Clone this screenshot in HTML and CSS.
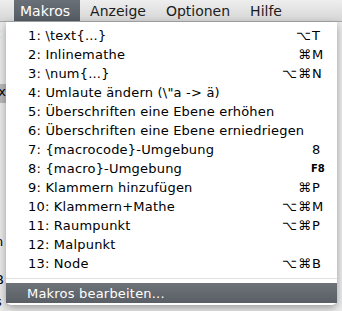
FILE: index.html
```html
<!DOCTYPE html>
<html lang="de">

<head>
    <meta charset="UTF-8">
    <title>Makros</title>
    <link rel="stylesheet" href="styles.css">
</head>

<body>

    <div class="menubar">
        <span class="menu-title active">Makros</span>
        <span class="menu-title">Anzeige</span>
        <span class="menu-title">Optionen</span>
        <span class="menu-title">Hilfe</span>
    </div>

    <div class="window">
        <div class="edge-line l1">t</div>
        <div class="edge-line l2">x</div>
        <div class="edge-line l3">n</div>
        <div class="edge-line l4">B</div>
        <div class="edge-line l5">s</div>
    </div>

    <div class="dropdown">
        <ul class="items">
            <li><span class="label">1: \text{...}</span><span class="keys"><span class="mods">⌥</span><span class="key">T</span></span></li>
            <li><span class="label">2: Inlinemathe</span><span class="keys"><span class="mods">⌘</span><span class="key">M</span></span></li>
            <li><span class="label">3: \num{...}</span><span class="keys"><span class="mods">⌥⌘</span><span class="key">N</span></span></li>
            <li><span class="label">4: Umlaute ändern (\"a -&gt; ä)</span></li>
            <li><span class="label">5: Überschriften eine Ebene erhöhen</span></li>
            <li><span class="label">6: Überschriften eine Ebene erniedriegen</span></li>
            <li><span class="label">7: {macrocode}-Umgebung</span><span class="keys"><span class="mods"></span><span class="key">8</span></span></li>
            <li><span class="label">8: {macro}-Umgebung</span><span class="keys"><span class="mods"></span><span class="key fkey">F8</span></span></li>
            <li><span class="label">9: Klammern hinzufügen</span><span class="keys"><span class="mods">⌘</span><span class="key">P</span></span></li>
            <li><span class="label">10: Klammern+Mathe</span><span class="keys"><span class="mods">⌥⌘</span><span class="key">M</span></span></li>
            <li><span class="label">11: Raumpunkt</span><span class="keys"><span class="mods">⌥⌘</span><span class="key">P</span></span></li>
            <li><span class="label">12: Malpunkt</span></li>
            <li><span class="label">13: Node</span><span class="keys"><span class="mods">⌥⌘</span><span class="key">B</span></span></li>
        </ul>
        <div class="separator"></div>
        <div class="edit-item">Makros bearbeiten...</div>
    </div>

</body>

</html>
```

FILE: styles.css
```css
body {
    margin: 0;
    width: 342px;
    height: 311px;
    overflow: hidden;
    background-color: #ececec;
    font-family: "DejaVu Sans", sans-serif;
    font-size: 13px;
    color: #000;
    position: relative;
}

.menubar {
    height: 22px;
    display: flex;
    align-items: stretch;
    padding-left: 14px;
    background: linear-gradient(#eeeeee, #d6d6d6);
    border-bottom: 1px solid #a8a8a8;
    box-sizing: border-box;
}

.menu-title {
    display: flex;
    align-items: center;
    padding: 0 10px;
    font-size: 14px;
    color: #1c1c1c;
}

.menu-title.active {
    background: linear-gradient(#6a7078, #555b63);
    color: #fff;
    padding: 0 10px 0 6px;
}

.window {
    position: absolute;
    left: 0;
    top: 22px;
    width: 8px;
    bottom: 0;
    background-color: #e9e9e9;
}

.edge-line {
    position: absolute;
    left: -5px;
    font-size: 13px;
}

.l1 { top: 4px; }
.l2 { top: 62px; height: 19px; width: 12px; background: #b9b9b9; left: -6px; text-align: right; }
.l3 { top: 212px; }
.l4 { top: 250px; }
.l5 { top: 272px; }

.dropdown {
    position: absolute;
    left: 6px;
    top: 22px;
    width: 331px;
    padding: 4px 0 2px;
    background-color: #fff;
    border-radius: 0 0 5px 5px;
    box-shadow: 0 3px 8px rgba(0, 0, 0, 0.35);
}

.items {
    list-style: none;
    margin: 0;
    padding: 0;
}

.items li {
    height: 19px;
    display: flex;
    align-items: center;
    justify-content: space-between;
    padding: 0 12px 0 22px;
}

.label {
    letter-spacing: 0.2px;
}

.keys {
    display: flex;
}

.mods {
    text-align: right;
    letter-spacing: 1px;
}

.key {
    width: 13px;
    text-align: left;
}

.fkey {
    font-size: 10px;
    font-weight: bold;
    width: 14px;
}

.separator {
    height: 1px;
    margin: 5px 0 4px;
    background-color: #e2e2e2;
}

.edit-item {
    height: 20px;
    display: flex;
    align-items: center;
    padding-left: 21px;
    letter-spacing: 0.2px;
    background: linear-gradient(#6e7379, #5a5f65);
    color: #fff;
}
```
